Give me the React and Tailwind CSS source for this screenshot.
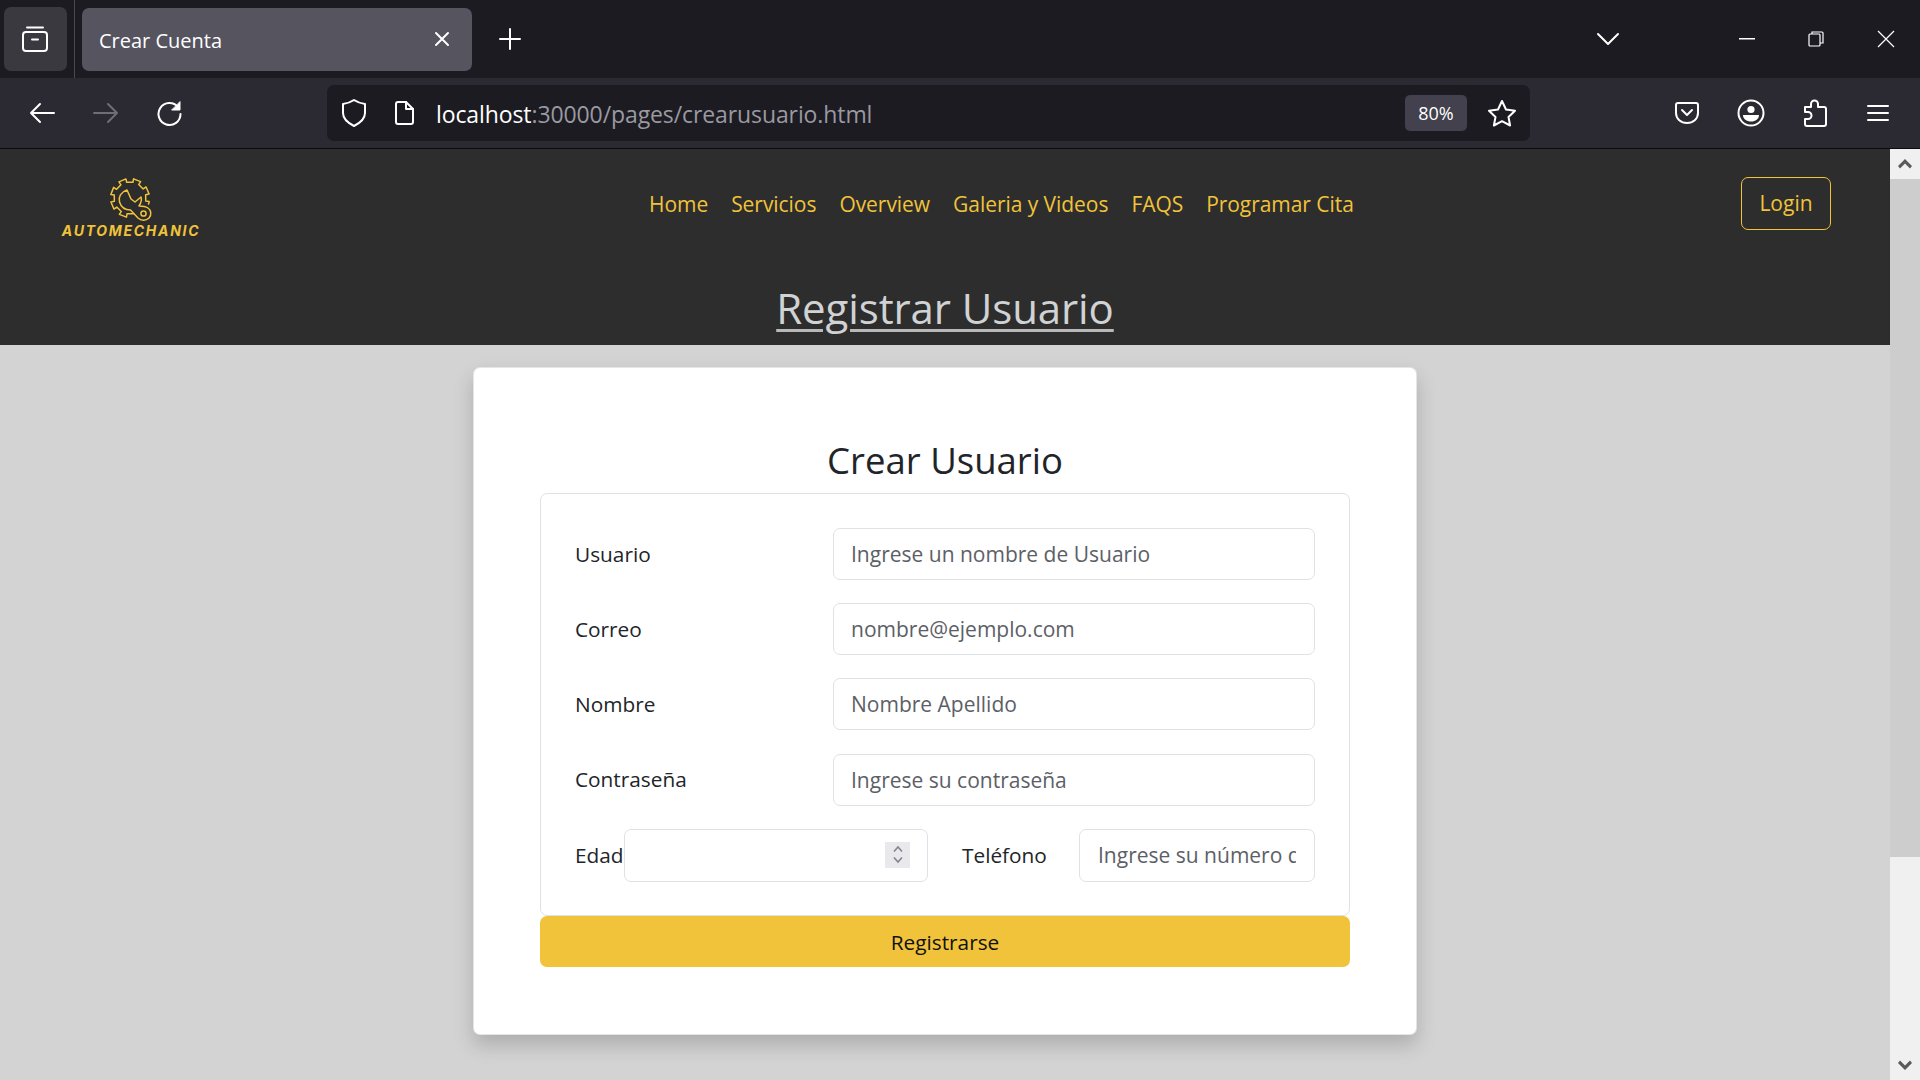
import React from "react";

const I = ({ className = "", children, w = 24, h = 24, vb }) => (
  <svg width={w} height={h} viewBox={vb || `0 0 ${w} ${h}`} fill="none" stroke="currentColor" strokeWidth="2" strokeLinecap="round" strokeLinejoin="round" className={className}>
    {children}
  </svg>
);

const gearPath = () => {
  const cx = 23, cy = 20, R = 19.5, r = 16;
  const pt = (a, rad) => `${(cx + rad * Math.cos(a)).toFixed(2)} ${(cy + rad * Math.sin(a)).toFixed(2)}`;
  const step = (Math.PI * 2) / 8;
  const pts = [];
  const start = (78 * Math.PI) / 180;
  const end = start + (300 * Math.PI) / 180;
  let a = start;
  pts.push(`M${pt(a, r)}`);
  for (let i = 0; a < end && i < 20; i++) {
    const next = a + step / 2;
    const outer = i % 2 === 1;
    pts.push(`L${pt(a, outer ? R : r)}`);
    pts.push(`L${pt(Math.min(next, end), outer ? R : r)}`);
    a = next;
  }
  return pts.join(" ");
};

const Logo = () => (
  <svg width="48" height="44" viewBox="0 0 48 44" fill="none" stroke="#f0c33a" strokeWidth="1.500" strokeLinejoin="round" strokeLinecap="round">
    <path d={gearPath()} />
    <path d="M20 12C14 14 11 19 12.500 24C14 29 18 32 23.500 32L31 40C34 43 39 43 42 40C45 37 44 32 41 30C38 28 34 28 32 28C34 25 35 22 34 19L28 24L24 21L20 12Z" />
    <circle cx="36.500" cy="35.500" r="2.600" />
  </svg>
);

const Field = ({ label, placeholder }) => (
  <div className="flex items-center h-[52px]">
    <label className="w-[258px] shrink-0 text-[#212529] mt-[1px]">{label}</label>
    <input placeholder={placeholder} className="w-[482px] h-[52px] px-[17px] text-[21px] bg-white border border-[#dee2e6] rounded-[7px] outline-none placeholder:text-[#5c6066]" />
  </div>
);

export default function App() {
  return (
    <div className="w-[1920px] h-[1080px] overflow-hidden flex flex-col bg-[#d3d3d3] font-['Open_Sans',sans-serif] text-[20.800px]">
      {/* tab strip */}
      <div className="h-[78px] shrink-0 bg-[#1c1b22] flex items-center text-white">
        <div className="ml-[4px] w-[63px] h-[64px] rounded-[7px] bg-[#3a3940] flex items-center justify-center">
          <I w={28} h={30} className="text-white -ml-[2px]">
            <path d="M6 3.500h16" />
            <rect x="2" y="8" width="24" height="19" rx="3" />
            <path d="M11 15.500h6" />
          </I>
        </div>
        <div className="ml-[7px] w-px h-[78px] bg-[#4a4950]" />
        <div className="ml-[7px] w-[390px] h-[63px] rounded-[7px] bg-[#55545f] flex items-center pl-[17px] pr-[21px] justify-between">
          <span className="text-[20px] mt-[3px]">Crear Cuenta</span>
          <I w={18} h={18} className="text-white -mt-[1px]">
            <path d="M3 3l12 12M15 3L3 15" />
          </I>
        </div>
        <I w={24} h={24} className="ml-[26px] text-white">
          <path d="M12 2v20M2 12h20" />
        </I>
        <div className="ml-auto flex items-center">
          <I w={24} h={14} className="text-white mr-[119px]">
            <path d="M2 2l10 10L22 2" />
          </I>
          <svg width="16" height="2" className="mr-[53px]"><rect width="16" height="1.500" fill="#fff" /></svg>
          <svg width="16" height="18" viewBox="0 0 16 18" fill="none" stroke="#fff" strokeWidth="1.200" className="mr-[53px]">
            <rect x="1" y="4" width="11" height="12" rx="1" />
            <path d="M4 4V2h10a1 1 0 0 1 1 1v10h-3" />
          </svg>
          <svg width="18" height="18" viewBox="0 0 18 18" fill="none" stroke="#fff" strokeWidth="1.200" className="mr-[25px]">
            <path d="M1 1l16 16M17 1L1 17" />
          </svg>
        </div>
      </div>
      {/* toolbar */}
      <div className="h-[71px] shrink-0 bg-[#2b2a33] border-b border-[#0c0c0d] flex items-center text-white">
        <I w={28} h={24} className="ml-[28px] text-white">
          <path d="M26 12H3M12 3l-9 9 9 9" />
        </I>
        <I w={28} h={24} className="ml-[36px] text-[#6f6e76]">
          <path d="M2 12h23M16 3l9 9-9 9" />
        </I>
        <I w={28} h={28} className="ml-[36px] text-white">
          <path d="M22 8a11 11 0 1 0 2.500 7" />
          <path d="M24 3v8h-8z" fill="#fff" strokeWidth="1" />
        </I>
        <div className="ml-[143px] w-[1203px] h-[56px] rounded-[7px] bg-[#1c1b22] flex items-center">
          <I w={26} h={30} className="ml-[14px] text-white">
            <path d="M13 2c3 2 7 3.500 11 4v9c0 6-5 10-11 13C7 25 2 21 2 15V6c4-.5 8-2 11-4z" />
          </I>
          <I w={22} h={26} className="ml-[26px] text-white">
            <path d="M3 4a2 2 0 0 1 2-2h8l7 7v13a2 2 0 0 1-2 2H5a2 2 0 0 1-2-2z" />
            <path d="M13 2v7h7" />
          </I>
          <span className="ml-[21px] mt-[2px] text-[23px] tracking-[-0.1px] leading-none">
            localhost<span className="text-[#9a99a1]">:30000/pages/crearusuario.html</span>
          </span>
          <div className="ml-auto w-[62px] h-[36px] rounded-[5px] bg-[#42414d] flex items-center justify-center text-[18px]">80%</div>
          <I w={30} h={28} className="ml-[20px] mr-[13px] text-white">
            <path d="M15 2l4 8.500 9 1.200-6.500 6.300 1.600 8.500-8.100-4.300-8.100 4.300L8.500 18 2 11.700l9-1.200z" />
          </I>
        </div>
        <div className="flex-1 flex items-center">
          <I w={26} h={26} className="ml-[144px] text-white">
            <path d="M2 5a2 2 0 0 1 2-2h18a2 2 0 0 1 2 2v8c0 6-5 10-11 10S2 19 2 13z" />
            <path d="M8 10l5 5 5-5" />
          </I>
          <svg width="28" height="28" viewBox="0 0 28 28" fill="none" stroke="#fff" strokeWidth="2" className="ml-[37px]">
            <circle cx="14" cy="14" r="12.500" />
            <circle cx="14" cy="10.500" r="3.600" fill="#fff" stroke="none" />
            <path d="M6 16h16c0 4-3.500 6.500-8 6.500S6 20 6 16z" fill="#fff" stroke="none" />
          </svg>
          <I w={26} h={28} className="ml-[37px] text-white">
            <path d="M3 8h6V5a3.500 3.500 0 0 1 7 0v3h6a2 2 0 0 1 2 2v15a2 2 0 0 1-2 2H5a2 2 0 0 1-2-2v-5h3a3 3 0 0 0 0-7H3z" />
          </I>
          <I w={22} h={18} className="ml-[39px] text-white">
            <path d="M1 2h20M1 9h20M1 16h20" />
          </I>
        </div>
      </div>
      {/* page */}
      <div className="flex-1 flex min-h-0">
        <div className="flex-1 min-w-0 flex flex-col">
          <header className="h-[196px] shrink-0 bg-[#2d2d2d]">
            <div className="h-[90px] flex items-center relative">
              <div className="ml-[62px] w-[138px] pt-[30px] flex flex-col items-center text-[#f0c33a]">
                <Logo />
                <span className="text-[14px] font-bold italic tracking-[1.7px] leading-[18px] font-['Inter',sans-serif]">AUTOMECHANIC</span>
              </div>
              <nav className="ml-[449px] mt-[22px] flex gap-[23px] text-[#f0c33a] text-[21px] tracking-[-0.05px]">
                <a>Home</a>
                <a>Servicios</a>
                <a>Overview</a>
                <a>Galeria y Videos</a>
                <a>FAQS</a>
                <a>Programar Cita</a>
              </nav>
              <button className="ml-auto mr-[59px] mt-[19px] w-[90px] h-[53px] rounded-[7px] border border-[#f0c33a] text-[#f0c33a] text-[21px]">Login</button>
            </div>
            <h1 className="mt-[43px] text-center text-[42px] leading-[52px] underline underline-offset-[5px] decoration-[3px] decoration-[#b8b8b8] text-[#d0d2d4] tracking-[-0.1px]">Registrar Usuario</h1>
          </header>
          <main className="flex-1 pt-[22px] flex justify-center items-start">
            <div className="w-[944px] h-[668px] bg-white rounded-[7px] shadow-[0_10px_20px_rgba(0,0,0,0.18)] border border-black/10 px-[66px] pt-[62px]">
              <h2 className="text-center text-[36.500px] leading-[60px] text-[#212529]">Crear Usuario</h2>
              <div className="w-[810px] h-[423px] mt-[3px] border border-[#dee2e6] rounded-[7px] pl-[34px] pt-[34px] flex flex-col gap-[23.200px]">
                <Field label="Usuario" placeholder="Ingrese un nombre de Usuario" />
                <Field label="Correo" placeholder="nombre@ejemplo.com" />
                <Field label="Nombre" placeholder="Nombre Apellido" />
                <Field label="Contraseña" placeholder="Ingrese su contraseña" />
                <div className="flex items-center h-[53px] text-[#212529]">
                  <label className="w-[49px] shrink-0">Edad</label>
                  <div className="relative w-[304px] h-[53px]">
                    <input type="text" className="w-full h-full px-[18px] bg-white border border-[#dee2e6] rounded-[7px] outline-none" />
                    <span className="absolute right-[18px] top-[13px] w-[25px] h-[26px] bg-[#e9e9ed] flex flex-col items-center justify-center gap-[3px]">
                      <svg width="12" height="8" viewBox="0 0 12 8" fill="none" stroke="#85848c" strokeWidth="1.600"><path d="M2 6.500L6 2l4 4.500" /></svg>
                      <svg width="12" height="8" viewBox="0 0 12 8" fill="none" stroke="#85848c" strokeWidth="1.600"><path d="M2 1.500L6 6l4-4.500" /></svg>
                    </span>
                  </div>
                  <label className="ml-[34px] w-[117px] shrink-0">Teléfono</label>
                  <input placeholder="Ingrese su número de teléfono" className="w-[236px] h-[53px] px-[18px] text-[21px] bg-white border border-[#dee2e6] rounded-[7px] outline-none placeholder:text-[#5c6066]" />
                </div>
              </div>
              <button className="w-[810px] h-[51px] pt-[2px] bg-[#f0c33a] rounded-[7px] text-[#111] block">Registrarse</button>
            </div>
          </main>
        </div>
        {/* scrollbar */}
        <div className="w-[30px] shrink-0 flex flex-col bg-[#f0f0f0]">
          <div className="h-[30px] shrink-0 flex items-center justify-center">
            <svg width="16" height="12" viewBox="0 0 16 12" fill="#5a5a5a"><path d="M8 1l7 7-2 2.500-5-5-5 5L1 8z" /></svg>
          </div>
          <div className="h-[678px] shrink-0 bg-[#cdcdcd]" />
          <div className="flex-1" />
          <div className="h-[30px] shrink-0 flex items-center justify-center">
            <svg width="16" height="12" viewBox="0 0 16 12" fill="#5a5a5a"><path d="M8 11L1 4l2-2.500 5 5 5-5L15 4z" /></svg>
          </div>
        </div>
      </div>
    </div>
  );
}
